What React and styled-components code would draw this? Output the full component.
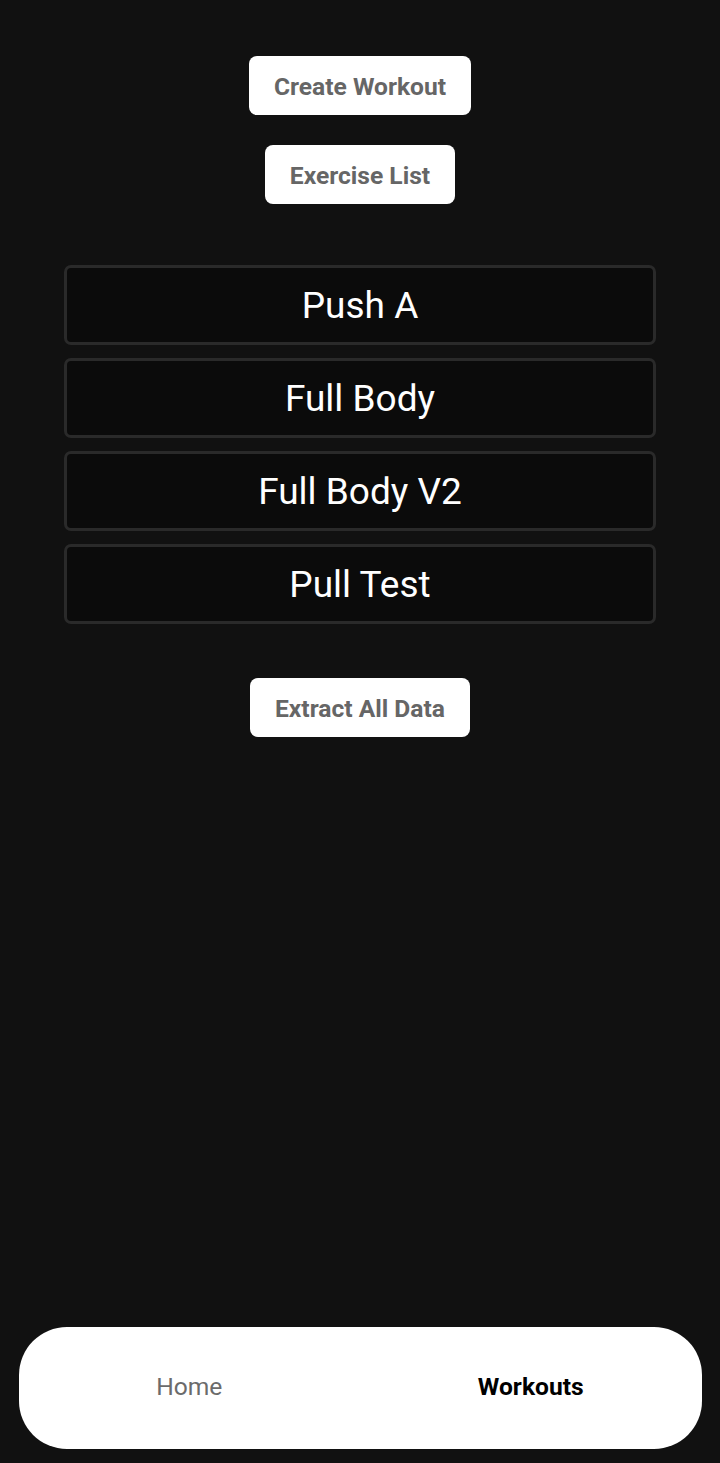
import React from 'react';
import styled, { createGlobalStyle } from 'styled-components';

const GlobalStyle = createGlobalStyle`
	html, body {
		margin: 0;
		padding: 0;
		background: #111111;
	}
	body {
		font-family: Roboto, 'Liberation Sans', sans-serif;
	}
`;

const Screen = styled.div`
	width: 720px;
	height: 1463px;
	background: #111111;
	display: flex;
	flex-direction: column;
	align-items: center;
	box-sizing: border-box;
	padding-top: 56px;
`;

const ActionButton = styled.button`
	height: 59px;
	padding: 2px 25px 0;
	border: none;
	border-radius: 8px;
	background: #ffffff;
	color: #666666;
	font-family: Roboto, 'Liberation Sans', sans-serif;
	font-weight: 700;
	font-size: 24.6px;
	margin-bottom: ${(props) => props.spacing || 0}px;
`;

const WorkoutList = styled.div`
	width: 592px;
	display: flex;
	flex-direction: column;
	gap: 13px;
	margin-top: 61px;
	margin-bottom: 54px;
`;

const WorkoutItem = styled.div`
	height: 80px;
	box-sizing: border-box;
	border: 3px solid #2a2a2a;
	border-radius: 7px;
	background: #0b0b0b;
	color: #ffffff;
	font-size: 37px;
	display: flex;
	align-items: center;
	justify-content: center;
`;

const Spacer = styled.div`
	flex: 1;
`;

const NavBar = styled.nav`
	width: 683px;
	height: 122px;
	background: #ffffff;
	border-radius: 48px;
	display: flex;
	margin-bottom: 14px;
`;

const NavItem = styled.div`
	flex: 1;
	display: flex;
	align-items: center;
	justify-content: center;
	padding-bottom: 4px;
	font-size: 24.6px;
	font-weight: ${(props) => (props.active ? 700 : 400)};
	color: ${(props) => (props.active ? '#000000' : '#6b6b6b')};
`;

const workouts = ['Push A', 'Full Body', 'Full Body V2', 'Pull Test'];

const App = () => (
	<>
		<GlobalStyle />
		<Screen>
			<ActionButton spacing={30}>Create Workout</ActionButton>
			<ActionButton>Exercise List</ActionButton>
			<WorkoutList>
				{workouts.map((name) => (
					<WorkoutItem key={name}>{name}</WorkoutItem>
				))}
			</WorkoutList>
			<ActionButton>Extract All Data</ActionButton>
			<Spacer />
			<NavBar>
				<NavItem>Home</NavItem>
				<NavItem active>Workouts</NavItem>
			</NavBar>
		</Screen>
	</>
);

export default App;
